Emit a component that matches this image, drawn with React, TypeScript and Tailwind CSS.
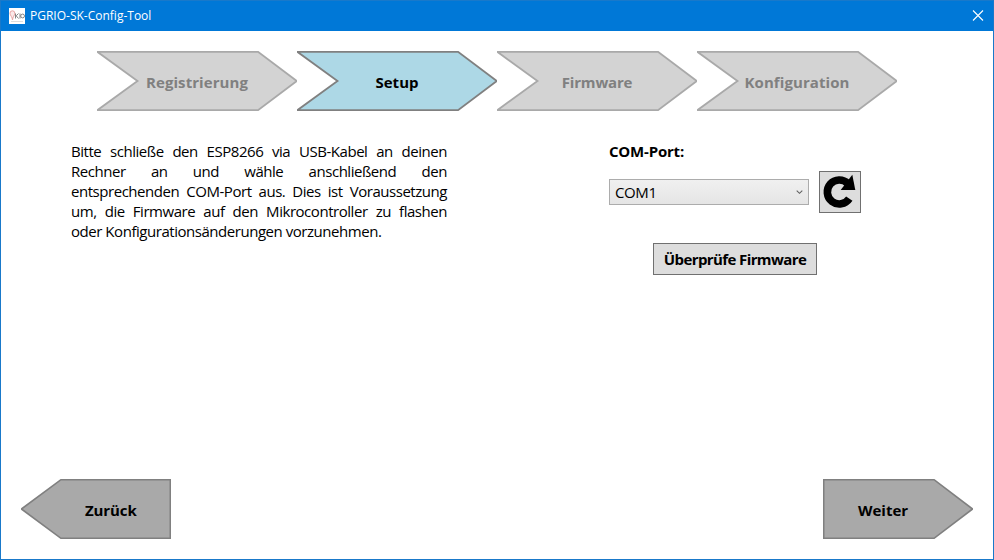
type StepProps = { label: string; active?: boolean; tracking: string };

function Step({ label, active = false, tracking }: StepProps) {
  return (
    <li className="grid h-[60px] w-[200px]">
      <svg className="col-start-1 row-start-1" width="200" height="60" viewBox="0 0 200 60">
        <path
          d="M0.3 0.8H161L199.8 30L161 59.2H0.3L40.5 30Z"
          fill={active ? "#add8e6" : "#d3d3d3"}
          stroke={active ? "#808080" : "#a9a9a9"}
          strokeWidth="1.8"
        />
      </svg>
      <span
        className={`col-start-1 row-start-1 place-self-center pt-px text-[15px] leading-5 font-bold ${tracking} ${
          active ? "text-black" : "text-[#808080]"
        }`}
      >
        {label}
      </span>
    </li>
  );
}

function NavButton({ label, back = false }: { label: string; back?: boolean }) {
  return (
    <button className="grid h-[60px] w-[150px]">
      <svg className="col-start-1 row-start-1" width="150" height="60" viewBox="0 0 150 60">
        <path
          d={back ? "M149.3 0.7H40L0.4 30L40 59.3H149.3Z" : "M0.7 0.7H111L149.6 30L111 59.3H0.7Z"}
          fill="#a9a9a9"
          stroke="#808080"
          strokeWidth="1.6"
        />
      </svg>
      <span
        className={`col-start-1 row-start-1 self-center pt-px text-left text-[15px] leading-5 font-bold ${
          back ? "pl-16 tracking-[-0.1px]" : "pl-[35px] tracking-[0px]"
        }`}
      >
        {label}
      </span>
    </button>
  );
}

const intro = [
  "Bitte schließe den ESP8266 via USB-Kabel an deinen",
  "Rechner an und wähle anschließend den",
  "entsprechenden COM-Port aus. Dies ist Voraussetzung",
  "um, die Firmware auf den Mikrocontroller zu flashen",
];

export default function App() {
  return (
    <div className="flex h-[560px] w-[994px] flex-col overflow-hidden border border-[#1979ca] bg-white font-['Open_Sans','Noto_Sans',sans-serif] text-black">
      <header className="flex h-[30px] shrink-0 items-center bg-[#0078d7] pr-[9px] pl-2 text-white">
        <svg width="16" height="16" viewBox="0 0 16 16">
          <path fill="#fff" d="M0 0h16v16H0z" />
          <path d="M3.500 12C3.500 9 1 7.500 1 5.200a2.400 2.400 0 0 1 4.800 0C5.800 7.500 3.500 9 3.500 12Z" fill="#fbeaea" stroke="#e8a5a5" />
          <path d="M6.500 10.500V5.500M9.500 5.500L7.200 7.800L9.500 10.500" fill="none" stroke="#777" strokeWidth="0.9" />
          <path d="M11 5.500v5" stroke="#777" strokeWidth="0.9" />
          <circle cx="13.600" cy="8" r="1.900" fill="none" stroke="#777" strokeWidth="0.9" />
          <path d="M2 13.500h12" stroke="#ddd" />
        </svg>
        <h1 className="ml-[5px] text-[12px] leading-4 tracking-[0px] whitespace-nowrap">PGRIO-SK-Config-Tool</h1>
        <button className="ml-auto" aria-label="Schließen">
          <svg width="12" height="12" viewBox="0 0 12 12">
            <path d="M1 0.500L11 10.500M11 0.500L1 10.500" stroke="#fff" strokeWidth="1.1" />
          </svg>
        </button>
      </header>

      <ol className="mt-5 ml-24 flex">
        <Step label="Registrierung" tracking="tracking-[0.07px]" />
        <Step label="Setup" active tracking="tracking-[0px]" />
        <Step label="Firmware" tracking="tracking-[-0.2px]" />
        <Step label="Konfiguration" tracking="tracking-[0.08px]" />
      </ol>

      <main className="flex flex-1 pt-[30px] pl-[70px]">
        <p className="w-[376px] text-[15px] leading-5 tracking-[-0.46px] whitespace-nowrap">
          {intro.map((line) => (
            <span key={line} className="block [text-align-last:justify]">
              {line}
            </span>
          ))}
          <span className="block">oder Konfigurationsänderungen vorzunehmen.</span>
        </p>

        <section className="ml-[162px] flex w-[252px] flex-col">
          <h2 className="text-[15px] leading-5 font-bold tracking-[-0.2px]">COM-Port:</h2>
          <div className="mt-[10px] flex items-center gap-[10px]">
            <div className="flex h-[26px] w-[200px] items-center justify-between border border-[#acacac] bg-linear-to-b from-[#f0f0f0] to-[#e5e5e5] pr-[5px] pl-[5px]">
              <span className="pb-px text-[15px] leading-5 tracking-[-0.4px]">COM1</span>
              <svg width="7" height="5" viewBox="0 0 7 5">
                <path d="M0.700 0.700L3.500 3.300L6.300 0.700" fill="none" stroke="#606060" strokeWidth="1.1" />
              </svg>
            </div>
            <button className="flex size-[42px] items-center justify-center border border-[#707070] bg-[#ddd]" aria-label="Aktualisieren">
              <svg width="40" height="40" viewBox="0 0 40 40">
                <path d="M29.300 26.700A12 12 0 1 1 27.800 11.500" fill="none" stroke="#000" strokeWidth="7.600" />
                <path d="M32.300 2.700L35.300 18H20.700Z" />
              </svg>
            </button>
          </div>
          <button className="mt-[30px] ml-11 flex h-8 w-[164px] items-center justify-center border border-[#707070] bg-[#ddd] text-[15px] leading-5 font-bold tracking-[-0.6px] whitespace-nowrap">
            Überprüfe Firmware
          </button>
        </section>
      </main>

      <footer className="mb-5 flex justify-between pr-5 pl-5">
        <NavButton label="Zurück" back />
        <NavButton label="Weiter" />
      </footer>
    </div>
  );
}
